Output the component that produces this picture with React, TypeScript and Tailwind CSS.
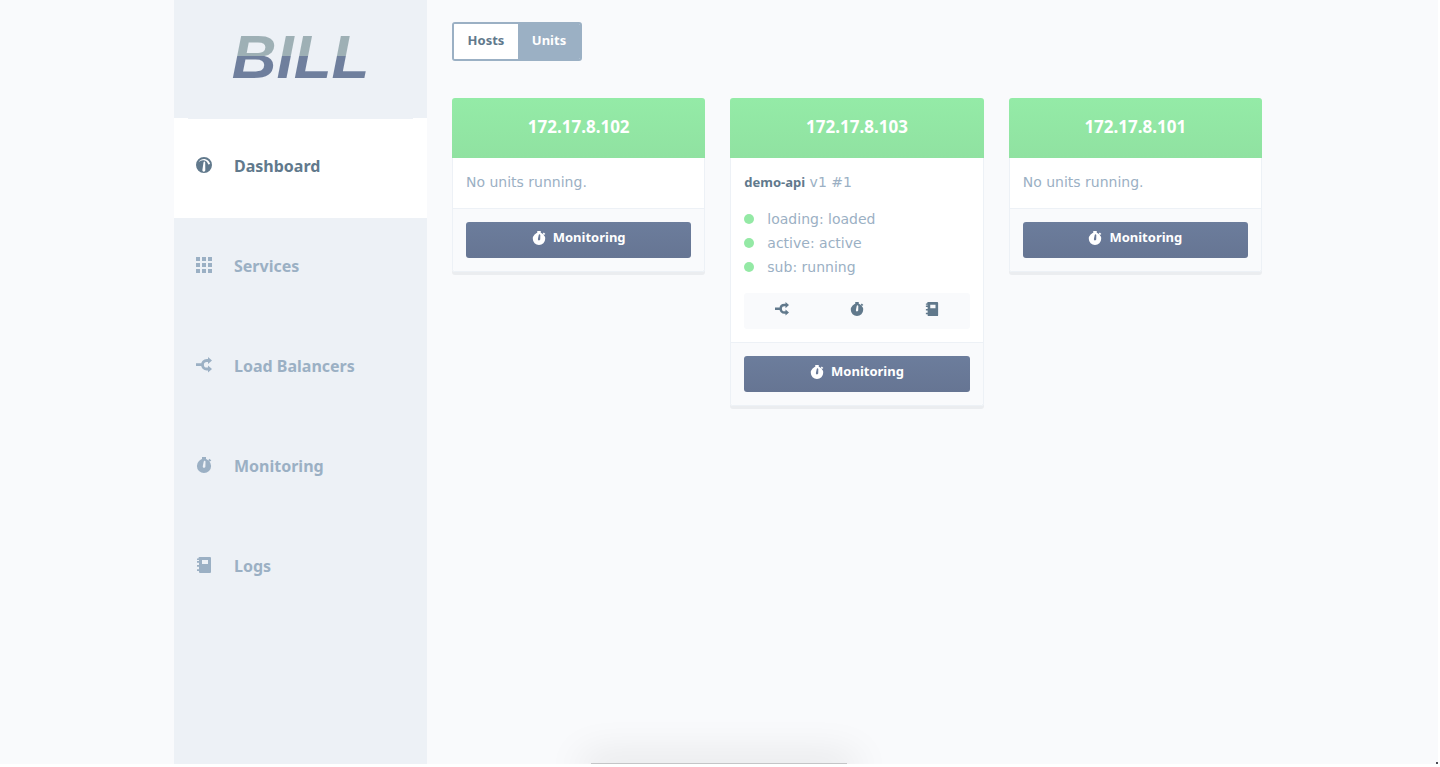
import type { ReactNode } from "react";

type IconProps = { className?: string };

function GaugeIcon({ className }: IconProps) {
  return (
    <svg viewBox="0 0 16 16" className={className} fill="currentColor" aria-hidden="true">
      <path
        fillRule="evenodd"
        d="M8 0a8 8 0 1 1 0 16A8 8 0 0 1 8 0Zm.4 4.600c-.5 0-.8.300-.9.900l-1.100 7.500c0 1 .5 1.700 1.400 1.700s1.500-.7 1.500-1.600l-.1-7.600c0-.6-.4-.9-.8-.9ZM2.600 5.200C4.200 2.600 7 1.700 9.500 2.300c2.400.6 4.200 2.500 4.600 4.800l-1.900.500c-.4-2-1.700-3.500-3.500-4.100-2.100-.7-4.400 0-6.100 1.700Z"
      />
    </svg>
  );
}

function GridIcon({ className }: IconProps) {
  return (
    <svg viewBox="0 0 16 16" className={className} fill="currentColor" aria-hidden="true">
      <path d="M0 0h4v4H0zM6 0h4v4H6zM12 0h4v4h-4zM0 6h4v4H0zM6 6h4v4H6zM12 6h4v4h-4zM0 12h4v4H0zM6 12h4v4H6zM12 12h4v4h-4z" />
    </svg>
  );
}

function SplitIcon({ className }: IconProps) {
  return (
    <svg viewBox="0 0 16 16" className={className} aria-hidden="true">
      <path
        d="M0 7.700h5.500M13 3.500h-2.200c-2.700 0-4.300 1.900-4.300 4.200s1.600 4.300 4.300 4.300H13"
        fill="none"
        stroke="currentColor"
        strokeWidth="2.800"
      />
      <path d="M12 0 16 3.500 12 7zM12 8.500l4 3.500-4 3.500z" fill="currentColor" />
    </svg>
  );
}

function StopwatchIcon({ className }: IconProps) {
  return (
    <svg viewBox="0 0 16 16" className={className} aria-hidden="true">
      <path
        fillRule="evenodd"
        fill="currentColor"
        d="M8 1.800a7.100 7.100 0 1 1 0 14.200A7.100 7.100 0 0 1 8 1.800Zm.500 2c-.4 0-.7.300-.8.900l-.9 4.200c-.2 1.100.3 1.900 1.100 1.900s1.500-.5 1.500-1.600l.1-4.400c0-.6-.4-1-1-1Z"
      />
      <path d="M6 0h4v3H6zM12.200 3.200l1.300-1.500 1.800 1.700-1.700 1.300z" fill="currentColor" />
    </svg>
  );
}

function NotebookIcon({ className }: IconProps) {
  return (
    <svg viewBox="0 0 16 16" className={className} fill="currentColor" aria-hidden="true">
      <path
        fillRule="evenodd"
        d="M3.500 0H14a1 1 0 0 1 1 1v14a1 1 0 0 1-1 1H4a1 1 0 0 1-1-1v-1H1v-1.800h2v-2.400H1V8h2V5.800H1V4h2V3H1V1.600h1.500V1a1 1 0 0 1 1-1ZM6 3v4h6V3H6Z"
      />
    </svg>
  );
}

const navItems = [
  { label: "Dashboard", Icon: GaugeIcon, active: true },
  { label: "Services", Icon: GridIcon, active: false },
  { label: "Load Balancers", Icon: SplitIcon, active: false },
  { label: "Monitoring", Icon: StopwatchIcon, active: false },
  { label: "Logs", Icon: NotebookIcon, active: false },
];

function Sidebar() {
  return (
    <aside className="w-[253px] shrink-0 bg-[#edf1f6]">
      <h1 className="flex h-[118px] items-center justify-center pb-1 font-['Liberation_Sans',sans-serif] text-[62px] font-bold italic leading-[70px]">
        <span className="bg-linear-to-b from-[#9eb0b5] from-[49%] to-[#6f7f9d] to-[49%] bg-clip-text px-1 text-transparent">
          BILL
        </span>
      </h1>
      <nav>
        {navItems.map(({ label, Icon, active }) => (
          <a
            key={label}
            href="#"
            aria-current={active ? "page" : undefined}
            className={
              active
                ? "block h-[100px] bg-white text-[#61798c]"
                : "block h-[100px] text-[#9bb0c4]"
            }
          >
            <span className={active ? "mx-3.5 block h-px bg-[#edf1f6]" : "mx-3.5 block h-px"} />
            <span className="flex h-[92px] items-center gap-[22px] pl-[22px] text-base font-bold">
              <Icon className="size-4" />
              <span className="pt-0.5">{label}</span>
            </span>
          </a>
        ))}
      </nav>
    </aside>
  );
}

function HostCard({ address, children }: { address: string; children: ReactNode }) {
  return (
    <article className="rounded-[3px] shadow-[0_3px_0_#ebedf0]">
      <h2 className="flex h-[60px] items-center justify-center rounded-t-[3px] bg-linear-to-b from-[#94eba7] to-[#90e2a1] pb-0.5 text-[17px] font-bold text-white">
        {address}
      </h2>
      <div className="rounded-b-[3px] border-x border-b border-[#edf1f6] bg-white">
        <div className="px-[13px] pt-3 pb-3.5 font-['DejaVu_Sans',sans-serif] text-sm leading-6 text-[#9bb0c4]">
          {children}
        </div>
        <div className="rounded-b-[3px] border-t border-[#edf1f6] bg-[#f9fafc] p-[13px]">
          <button
            type="button"
            className="flex h-9 w-full items-center justify-center gap-[7px] rounded-[3px] bg-linear-to-b from-[#6c7d9c] to-[#667593] pb-1 text-[13px] font-bold text-white"
          >
            <StopwatchIcon className="size-3.5" />
            Monitoring
          </button>
        </div>
      </div>
    </article>
  );
}

const unitStates = ["loading: loaded", "active: active", "sub: running"];

const unitActions = [
  { label: "Load balancer", Icon: SplitIcon },
  { label: "Unit monitoring", Icon: StopwatchIcon },
  { label: "Unit logs", Icon: NotebookIcon },
];

function Unit() {
  return (
    <>
      <h3>
        <strong className="font-['Noto_Sans',sans-serif] text-[13px] font-bold leading-none text-[#61798c]">demo-api</strong> v1 #1
      </h3>
      <ul className="mt-[13px]">
        {unitStates.map((state) => (
          <li key={state} className="flex items-center gap-[13px]">
            <span className="size-2.5 rounded-full bg-[#94e9a5]" />
            {state}
          </li>
        ))}
      </ul>
      <div className="mt-3.5 -mb-px grid h-9 grid-cols-3 rounded-[3px] bg-[#f9fafc] text-[#61798c]">
        {unitActions.map(({ label, Icon }) => (
          <button key={label} type="button" aria-label={label} className="flex items-center justify-center pb-1">
            <Icon className="size-3.5" />
          </button>
        ))}
      </div>
    </>
  );
}

export default function App() {
  return (
    <div className="flex min-h-screen bg-white pr-0.5 pb-[3px] font-['Noto_Sans',sans-serif]">
      <div className="relative flex flex-1 justify-center overflow-hidden bg-[#f9fafc]">
        <div className="flex w-full max-w-[1090px]">
          <Sidebar />
          <main className="flex-1 pt-[22px] pr-0.5 pl-[25px]">
            <div className="flex h-[39px] w-fit overflow-hidden rounded-[3px] border-2 border-[#9bb0c4] text-[13px] font-bold">
              <button type="button" className="w-16 bg-white pb-0.5 text-[#61798c]">
                Hosts
              </button>
              <button type="button" className="w-[62px] bg-[#9bb0c4] pb-0.5 text-white">
                Units
              </button>
            </div>
            <div className="mt-[37px] grid grid-cols-3 items-start gap-[25px]">
              <HostCard address="172.17.8.102">
                <p>No units running.</p>
              </HostCard>
              <HostCard address="172.17.8.103">
                <Unit />
              </HostCard>
              <HostCard address="172.17.8.101">
                <p>No units running.</p>
              </HostCard>
            </div>
          </main>
        </div>
        <div className="absolute bottom-0 left-1/2 h-px w-64 -translate-x-1/2 bg-[#c4c5c7] shadow-[0_4px_40px_8px_rgba(0,0,0,0.14)]" />
        <div className="absolute right-0 bottom-0 size-0.5 bg-[#4b4b55]" />
      </div>
    </div>
  );
}
